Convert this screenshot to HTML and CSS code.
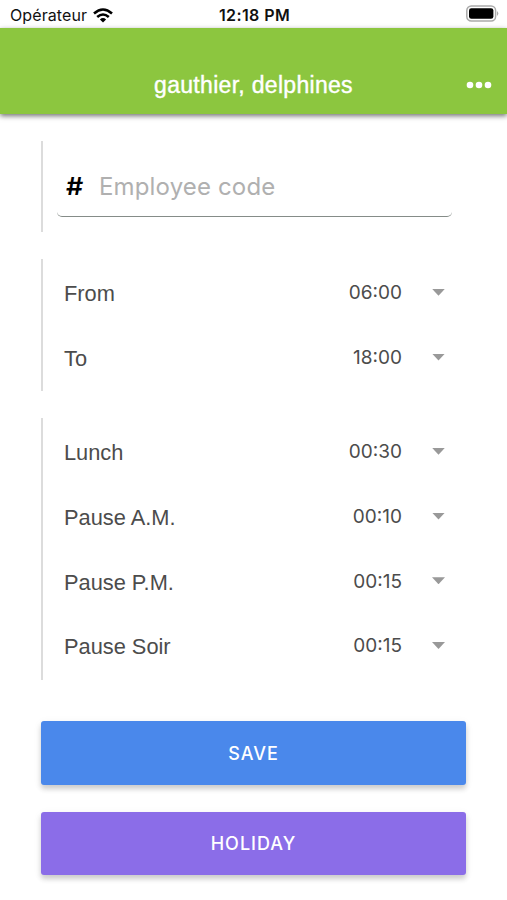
FILE: index.html
```html
<!DOCTYPE html>
<html lang="en">
<head>
<meta charset="utf-8">
<title>gauthier, delphines</title>
<link rel="stylesheet" href="styles.css">
</head>
<body>
<div class="status">
  <div class="carrier"><span>Opérateur</span>
    <svg class="wifi" width="20" height="15" viewBox="0 0 20 15"><g fill="none" stroke="#000" stroke-width="2.6"><path d="M1 5.4Q10-2.4 19 5.4"/><path d="M4.2 9Q10 4 15.8 9"/></g><path d="M6.9 11.4Q10 8.8 13.1 11.4L10 14.6Z"/></svg>
  </div>
  <div class="clock">12:18 PM</div>
  <svg class="battery" width="33" height="18" viewBox="0 0 33 18"><rect x=".8" y="1" width="28.8" height="15" rx="4.5" fill="#fff" stroke="#aaa" stroke-width="1.5"/><rect x="3" y="3.2" width="24.4" height="10.6" rx="2.4"/><path d="M31 6Q33.6 8.5 31 11Z" fill="#aaa"/></svg>
</div>
<header class="bar">
  <h1 class="title">gauthier, delphines</h1>
  <svg class="more" width="26" height="8" viewBox="0 0 26 8" fill="#fff"><circle cx="4" cy="4" r="3.3"/><circle cx="13" cy="4" r="3.3"/><circle cx="22" cy="4" r="3.3"/></svg>
</header>
<main class="form">
  <section class="group code">
    <label class="field"><span class="hash">#</span><span class="placeholder">Employee code</span></label>
  </section>
  <section class="group hours">
    <div class="row"><span class="label">From</span><span class="time">06:00</span><i class="caret"></i></div>
    <div class="row"><span class="label">To</span><span class="time">18:00</span><i class="caret"></i></div>
  </section>
  <section class="group breaks">
    <div class="row"><span class="label">Lunch</span><span class="time">00:30</span><i class="caret"></i></div>
    <div class="row"><span class="label">Pause A.M.</span><span class="time">00:10</span><i class="caret"></i></div>
    <div class="row"><span class="label">Pause P.M.</span><span class="time">00:15</span><i class="caret"></i></div>
    <div class="row"><span class="label">Pause Soir</span><span class="time">00:15</span><i class="caret"></i></div>
  </section>
  <button class="btn save">SAVE</button>
  <button class="btn holiday">HOLIDAY</button>
</main>
</body>
</html>
```
FILE: styles.css
```css
* { box-sizing: border-box; }
body { margin: 0; width: 507px; height: 900px; overflow: hidden; background: #fff; font-family: Inter, sans-serif; color: #4c4c4c; }
.status { height: 28px; display: grid; grid-template-columns: 1fr auto 1fr; align-items: center; padding: 2px 8px 0 10px; color: #111; }
.carrier { display: flex; align-items: center; gap: 6px; font-size: 16px; line-height: 24px; letter-spacing: .1px; }
.clock { font-size: 16px; font-weight: 600; line-height: 24px; letter-spacing: .4px; }
.battery { justify-self: end; margin-top: -2px; }
.bar { height: 86px; background: #8cc63f; box-shadow: 0 2px 5px rgba(0,0,0,.55); display: grid; grid-template-columns: 1fr auto 1fr; align-items: center; padding: 28px 15px 0; }
.title { grid-column: 2; margin: 0; font: 400 23px/28px "Liberation Sans", sans-serif; letter-spacing: .3px; color: #fff; -webkit-text-stroke: .4px #fff; }
.more { justify-self: end; }
.form { padding: 27px 41px 0; display: flex; flex-direction: column; }
.group { border-left: 2px solid #dcdcdc; margin-bottom: 27px; }
.code { height: 91px; padding: 15px 14px 0; }
.field { height: 60.5px; display: flex; align-items: center; border-bottom: 1.5px solid #858c88; border-radius: 5px; padding: 2px 0 0 9px; }
.hash { width: 33px; color: #000; font-size: 24px; line-height: 28px; font-weight: 600; transform-origin: 0 50%; transform: scaleX(1.12); margin-right: 0; }
.placeholder { color: #b0b0b0; font-size: 24px; line-height: 30px; letter-spacing: .15px; }
.hours { height: 132px; padding-top: 1px; }
.breaks { height: 262px; padding-top: 1px; margin-bottom: 41px; }
.row { height: 64.7px; display: flex; align-items: center; padding: 0 21px; }
.label { flex: 1; font: 21.8px/28px "Liberation Sans", sans-serif; padding-top: 4px; }
.time { font-size: 19px; line-height: 26px; padding-top: 2px; }
.caret { width: 13px; height: 7px; margin-left: 30px; background: #999; clip-path: polygon(0 0, 100% 0, 50% 100%); }
.btn { height: 63.5px; flex: none; border: 0; border-radius: 3px; color: #fff; font: 500 18px/24px Inter, sans-serif; letter-spacing: 1px; padding: 2px 0 0; box-shadow: 0 4px 5px rgba(0,0,0,.17), 0 2px 10px rgba(0,0,0,.06); }
.save { background: #4a88eb; margin-bottom: 27px; }
.holiday { background: #8b6de8; }
```
